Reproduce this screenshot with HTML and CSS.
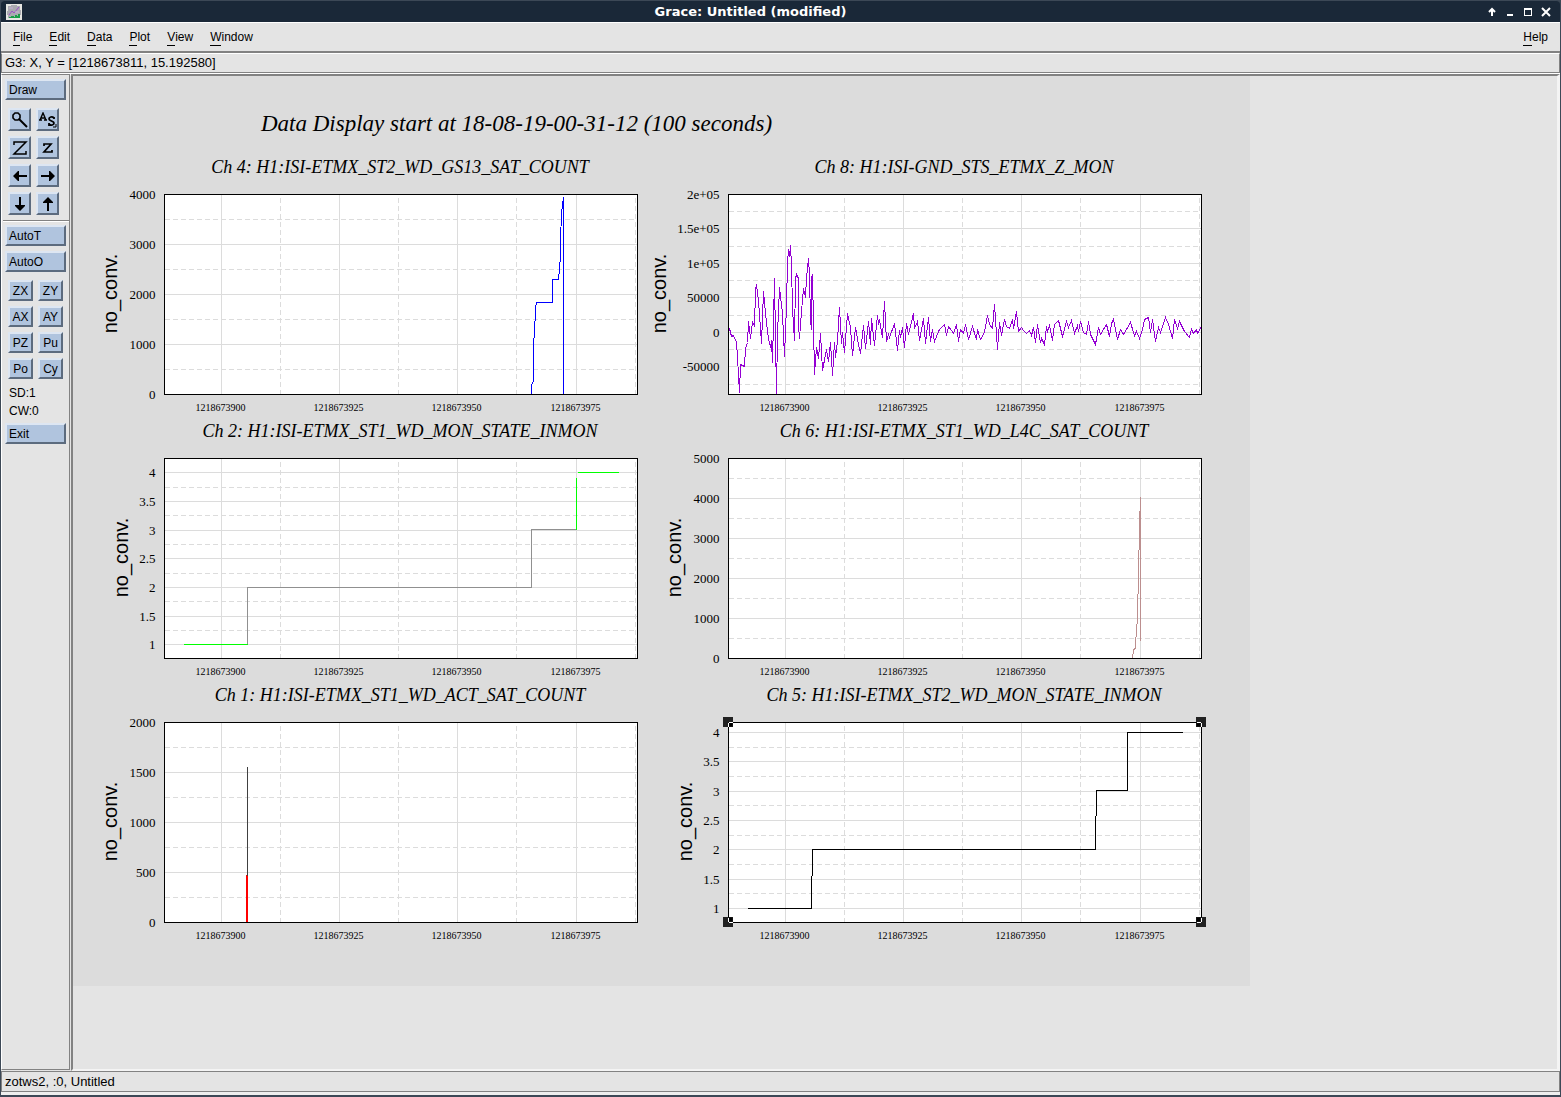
FILE: index.html
```html
<!DOCTYPE html>
<html lang="en">
<head>
  <meta charset="UTF-8" />
  <meta name="viewport" content="width=device-width, initial-scale=1.0"/>
  <title>Grace: Untitled (modified)</title>
  <link rel="stylesheet" href="styles.css">
</head>
<body>
  <div class="window">
    <header class="titlebar">
      <svg class="app-icon" width="16" height="16" viewBox="0 0 16 16">
        <rect width="16" height="16" fill="#e6e6e2"/>
        <path d="M2 2h3v-1h6v1h3v4h1v5h-1v3H2v-3H1V7h1z" fill="#aaaab0"/>
        <path d="M3 11l3-4 2 2 5-6" stroke="#9a50c8" stroke-width="1" fill="none"/>
        <path d="M3 4h4M9 8h4" stroke="#c8b4d8"/>
        <path d="M3 14v-1h2v-1h3v1h1v-2h2v1h1v-2h2v4z" fill="#18a048"/>
      </svg>
      <h1 class="window-title">Grace: Untitled (modified)</h1>
      <div class="window-buttons">
        <button aria-label="Shade"><svg width="10" height="10" viewBox="0 0 10 10"><path d="M5 9V3M2 5l3-3 3 3" stroke="#fff" stroke-width="2" fill="none"/></svg></button>
        <button aria-label="Minimize"><svg width="10" height="10" viewBox="0 0 10 10"><path d="M2 8h6" stroke="#fff" stroke-width="2"/></svg></button>
        <button aria-label="Maximize"><svg width="10" height="10" viewBox="0 0 10 10"><path d="M1 1h8v8H1zM2 3v5h6V3z" fill="#fff" fill-rule="evenodd"/></svg></button>
        <button aria-label="Close"><svg width="10" height="10" viewBox="0 0 10 10"><path d="M1 1l8 8M9 1L1 9" stroke="#fff" stroke-width="2"/></svg></button>
      </div>
    </header>

    <nav class="menubar">
      <button><span>F</span>ile</button>
      <button><span>E</span>dit</button>
      <button><span>D</span>ata</button>
      <button><span>P</span>lot</button>
      <button><span>V</span>iew</button>
      <button><span>W</span>indow</button>
      <button class="help"><span>H</span>elp</button>
    </nav>

    <div class="locator">G3: X, Y = [1218673811, 15.192580]</div>

    <div class="main">
      <aside class="toolbar">
        <button class="btn">Draw</button>
        <div class="icon-grid">
          <button class="btn" aria-label="Zoom">
            <svg width="16" height="16" viewBox="0 0 16 16"><path d="M3 1h3l2 2v3L6 8H3L1 6V3z" fill="none" stroke="#000" stroke-width="1.6"/><path d="M7 7l8 8" stroke="#000" stroke-width="2"/></svg>
          </button>
          <button class="btn" aria-label="Autoscale">
            <svg width="18" height="16" viewBox="0 0 18 16"><path d="M1 8l3-7 3 7M2 6h4M0 8h3M5 8h3" fill="none" stroke="#000" stroke-width="1.4"/><path d="M15 7V5M15 6c-2-2-5-1-5 1s5 2 5 4-3 3-5 1M10 11v3" fill="none" stroke="#000" stroke-width="1.8"/><path d="M14 15h3v-3" fill="none" stroke="#000"/></svg>
          </button>
          <button class="btn" aria-label="Zoom in">
            <svg width="16" height="14" viewBox="0 0 16 14"><path d="M2 4V1h12L2 13h12v-3" fill="none" stroke="#000" stroke-width="1.5"/></svg>
          </button>
          <button class="btn" aria-label="Zoom out">
            <svg width="12" height="12" viewBox="0 0 12 12"><path d="M2 4V2h7L2 10h8V8" fill="none" stroke="#000" stroke-width="1.7"/></svg>
          </button>
          <button class="btn" aria-label="Left">
            <svg width="14" height="12" viewBox="0 0 14 12"><path d="M0 6l5-5h1v4h8v2H6v4H5z"/></svg>
          </button>
          <button class="btn" aria-label="Right">
            <svg width="14" height="12" viewBox="0 0 14 12"><path d="M14 6L9 1H8v4H0v2h8v4h1z"/></svg>
          </button>
          <button class="btn" aria-label="Down">
            <svg width="12" height="14" viewBox="0 0 12 14"><path d="M6 14L1 9V8h4V0h2v8h4v1z"/></svg>
          </button>
          <button class="btn" aria-label="Up">
            <svg width="12" height="14" viewBox="0 0 12 14"><path d="M6 0l5 5v1H7v8H5V6H1V5z"/></svg>
          </button>
        </div>
        <hr>
        <button class="btn">AutoT</button>
        <button class="btn auto-o">AutoO</button>
        <div class="text-grid">
          <button class="btn">ZX</button>
          <button class="btn">ZY</button>
          <button class="btn">AX</button>
          <button class="btn">AY</button>
          <button class="btn">PZ</button>
          <button class="btn">Pu</button>
          <button class="btn">Po</button>
          <button class="btn">Cy</button>
        </div>
        <p>SD:1</p>
        <p>CW:0</p>
        <button class="btn exit">Exit</button>
      </aside>

      <main class="canvas">
        <div class="page">
          <h2 class="page-title">Data Display start at 18-08-19-00-31-12 (100 seconds)</h2>
          <div class="graphs"></div>
        </div>
      </main>
    </div>

    <footer class="statusbar">zotws2, :0, Untitled</footer>
  </div>

  <script>
    const WIDTH = 473;
    const HEIGHT = 200;
    // last three digits of the GPS time at the left edge
    const X_START = 888;
    const X_SPAN = 100;

    // paths are in plot pixels, origin at the top left of the frame
    const graphs = [
      {
        title: 'Ch 4: H1:ISI-ETMX_ST2_WD_GS13_SAT_COUNT',
        min: 0, max: 4000, step: 1000, labelX: -48,
        lines: [
          { color: '#0000ff', d: 'M367 200V191L369 186V148L370 140L371 114L372 108H388V85H394L395 75L396 61V46L397 19L398 10L399 3V200' }
        ]
      },
      {
        title: 'Ch 8: H1:ISI-GND_STS_ETMX_Z_MON',
        min: -90000, max: 200000, step: 50000, labelX: -63,
        lines: [
          { color: '#9400d3', d: 'M0 133L1 134L3 142L5 141L8 148L9 163L11 198L12 170L16 172L17 154L19 148L20 127L22 144L24 127L26 132L27 96L28 90L30 106L33 149L35 97L38 129L40 144L42 153L43 146L44 168L46 84L47 146L48 199L49 140L51 93L54 119L56 162L58 111L59 68L60 55L61 62L62 51L63 71L64 114L66 146L67 84L68 80L70 84V131L71 144L73 117L75 94L77 103L78 83L80 64L81 81L82 126L83 135V83L84 80L85 130L86 180L88 153L90 164L92 139L94 176L98 155L100 167L102 148L104 181L106 148L107 163L109 146L111 113L113 149L114 138L116 158L119 119L122 133L124 161L127 133L130 150L132 159L135 131L137 154L140 127L142 150L143 124L146 151L149 121L150 130L151 125L154 143L156 107' +
            'L158 147L160 140L161 143L166 129L169 156L171 136L172 143L174 133L176 153L178 129L180 140L185 119L186 134L189 127L191 146L195 124L197 149L200 123L202 147L204 135L206 147L210 137L211 135L216 130L218 141L220 132L223 136L225 139L228 130L230 147L232 135L235 139L237 130L240 145L244 132L248 145L249 135L252 145L255 140L257 133L259 121L261 130L264 134L266 110L269 155L271 128L273 141L276 125L278 132L281 134L284 125L285 134L288 117L290 137L293 133L295 136L298 139L301 136L303 141L305 133L307 148L309 130L312 148L313 144L316 150L318 132L319 137L321 131L324 146L326 130L330 126L334 142L338 127L340 133L343 126L346 139L349 131L350 137L352 127L355 138L358 140L360 127L362 140L367 150L370 133L372 140L378 130L381 142L383 129L385 125L389 145L392 135L395 140L402 128L406 141L408 137L411 144L414 135L416 125L420 123L422 138L424 125L427 147L430 133L432 138L437 123L440 130L444 144L446 125L449 134L451 127L456 137L461 143L463 135L465 139L468 135L469 139L473 132' }
        ]
      },
      {
        title: 'Ch 2: H1:ISI-ETMX_ST1_WD_MON_STATE_INMON',
        min: 0.76, max: 4.25, step: 0.5, labelX: -37,
        lines: [
          { color: '#909090', d: 'M83 186V129H367V71H412' },
          { color: '#00ff00', d: 'M19 186H83M412 71V19M413 14H454' }
        ]
      },
      {
        title: 'Ch 6: H1:ISI-ETMX_ST1_WD_L4C_SAT_COUNT',
        min: 0, max: 5000, step: 1000, labelX: -48,
        lines: [
          { color: '#bc8f8f', d: 'M404 200L405 191L407 190V183L408 175L409 156L410 117L411 68L412 39V182' }
        ]
      },
      {
        title: 'Ch 1: H1:ISI-ETMX_ST1_WD_ACT_SAT_COUNT',
        min: 0, max: 2000, step: 500, labelX: -48,
        lines: [
          { color: '#ff0000', d: 'M82 200V153H83V200' },
          { color: '#404040', d: 'M83 153V44' }
        ]
      },
      {
        title: 'Ch 5: H1:ISI-ETMX_ST2_WD_MON_STATE_INMON',
        min: 0.76, max: 4.17, step: 0.5, labelX: -37, selected: true,
        lines: [
          { color: '#000000', d: 'M19 186H83V157L84 150V127H367V98L368 90V68H399V10H454' }
        ]
      }
    ];

    function formatTick(value) {
      if (Math.abs(value) >= 100000) {
        return value / 100000 + 'e+05';
      }
      return String(value);
    }

    function drawGrid(graph) {
      let svg = '';
      for (let s = 12; s < X_SPAN; s += 25) {
        const x = Math.round(s * WIDTH / X_SPAN);
        const half = Math.round((s + 12.5) * WIDTH / X_SPAN);
        svg += `<path class="major" d="M${x} 0V${HEIGHT}"/>`;
        svg += `<path class="minor" d="M${half} ${HEIGHT}V0"/>`;
        svg += `<text class="x-tick" x="${x - 1}" y="216">1218673${X_START + s}</text>`;
      }
      const scale = HEIGHT / (graph.max - graph.min);
      const first = Math.ceil(graph.min / graph.step) - 1;
      for (let i = first; i * graph.step <= graph.max; i++) {
        const value = i * graph.step;
        const y = Math.round((graph.max - value) * scale);
        const half = Math.round((graph.max - value - graph.step / 2) * scale);
        if (value >= graph.min) {
          svg += `<path class="major" d="M0 ${y}H${WIDTH}"/>`;
          svg += `<text class="y-tick" x="-9" y="${y + 4}">${formatTick(value)}</text>`;
        }
        if (half > 0 && half < HEIGHT) {
          svg += `<path class="minor" d="M0 ${half}H${WIDTH}"/>`;
        }
      }
      return svg;
    }

    function drawHandles() {
      let svg = '';
      [0, WIDTH].forEach(x => {
        [0, HEIGHT].forEach(y => {
          const inX = x ? x - 5 : x;
          const inY = y ? y - 5 : y;
          svg += `<rect class="handle" x="${x - 6}" y="${y - 6}" width="10" height="10"/>`;
          svg += `<rect class="handle-inner" x="${inX}" y="${inY}" width="4" height="4"/>`;
          svg += `<path class="handle-line" d="M${x} ${inY}v4M${inX} ${y}h4"/>`;
        });
      });
      return svg;
    }

    function drawGraph(graph) {
      const lines = graph.lines.map(line => `<path class="line" stroke="${line.color}" d="${line.d}"/>`).join('');
      return `<svg class="graph" width="564" height="264" viewBox="0 0 564 264">
        <text class="graph-title" x="311" y="19">${graph.title}</text>
        <g transform="translate(75.5 40.5)">
          <rect class="plot-bg" width="${WIDTH}" height="${HEIGHT}"/>
          ${drawGrid(graph)}
          ${lines}
          <rect class="frame" width="${WIDTH}" height="${HEIGHT}"/>
          <text class="y-label" transform="translate(${graph.labelX} 99) rotate(-90)">no_conv.</text>
          ${graph.selected ? drawHandles() : ''}
        </g>
      </svg>`;
    }

    // Initialize
    graphs.forEach(graph => {
      document.querySelector('.graphs').insertAdjacentHTML('beforeend', drawGraph(graph));
    });
  </script>
</body>
</html>
```
FILE: styles.css
```css
* {
  box-sizing: border-box;
}
body {
  margin: 0;
  background: #3c4856;
  color: #000;
  font-family: "Liberation Sans", Arial, sans-serif;
  font-size: 12px;
}
button {
  font: inherit;
  color: inherit;
  background: none;
  border: none;
  padding: 0;
}
svg {
  display: block;
}
.window {
  display: flex;
  flex-direction: column;
  min-height: 100vh;
  padding: 0 1px 2px;
}
.titlebar {
  display: flex;
  align-items: center;
  height: 22px;
  padding: 0 9px 0 5px;
  background: #1a2838;
  border-top: 1px solid #3c4856;
  border-radius: 4px 4px 0 0;
  color: #fff;
}
.window-title {
  flex: 1;
  margin: 0;
  padding-right: 8px;
  font-family: "DejaVu Sans", sans-serif;
  font-size: 13px;
  line-height: 22px;
  text-align: center;
}
.window-buttons {
  display: flex;
  gap: 8px;
}
.menubar {
  display: flex;
  align-items: center;
  gap: 17px;
  height: 31px;
  padding: 0 12px;
  background: #e4e4e4;
  border-top: 1px solid #fff;
  border-bottom: 2px solid #828282;
  line-height: 16px;
}
.menubar span {
  display: inline-block;
  border-bottom: 1px solid #000;
}
.menubar .help {
  margin-left: auto;
}
.locator,
.statusbar {
  height: 20px;
  padding-left: 3px;
  background: #e4e4e4;
  border: 1px solid #828282;
  border-top-color: #fff;
  font-size: 13px;
  line-height: 17px;
}
.main {
  flex: 1;
  display: flex;
  background: #e4e4e4;
  border-top: 1px solid #fff;
}
.toolbar {
  flex: none;
  width: 69px;
  padding: 4px 3px 0;
  border: 1px solid #828282;
  border-left-color: #fff;
  margin-bottom: 1px;
}
.toolbar hr {
  margin: 5px -3px 3px -2px;
  border: none;
  border-top: 1px solid #828282;
  border-bottom: 1px solid #fff;
}
.toolbar p {
  margin: 0 0 0 4px;
  line-height: 18px;
}
.btn {
  display: flex;
  align-items: center;
  width: 61px;
  height: 21px;
  padding-left: 2px;
  background: #b0c4de;
  border: 2px solid;
  border-color: #dde6f2 #5c6b7e #5c6b7e #dde6f2;
}
.auto-o {
  margin-top: 5px;
}
.exit {
  margin-top: 3px;
}
.icon-grid,
.text-grid {
  display: grid;
  margin-left: 3px;
}
.icon-grid {
  grid-template-columns: 23px 23px;
  gap: 5px;
  margin-top: 8px;
}
.icon-grid .btn {
  width: 23px;
  height: 23px;
  padding: 0;
  justify-content: center;
}
.text-grid {
  grid-template-columns: 25px 25px;
  gap: 5px;
  margin-top: 8px;
  margin-bottom: 5px;
}
.text-grid .btn {
  width: 25px;
  padding: 0;
  justify-content: center;
}
.canvas {
  flex: 1;
  min-width: 0;
  margin-left: 1px;
  border: solid;
  border-width: 2px 3px 2px 2px;
  border-color: #828282 #f4f4f4 #f4f4f4 #828282;
}
.page {
  width: max-content;
  padding: 24px 33px 40px 16px;
  background: #dcdcdc;
}
.page-title {
  margin: 0 0 6px 172px;
  font-family: "Liberation Serif", serif;
  font-size: 23px;
  font-style: italic;
  font-weight: normal;
  line-height: 48px;
}
.graphs {
  display: grid;
  grid-template-columns: 564px 564px;
}
.graph {
  overflow: visible;
  font-family: "Liberation Serif", serif;
}
.graph-title {
  font-size: 18px;
  font-style: italic;
  text-anchor: middle;
}
.x-tick {
  font-size: 10px;
  text-anchor: middle;
}
.y-tick {
  font-size: 13px;
  text-anchor: end;
}
.y-label {
  font-family: "Liberation Sans", Arial, sans-serif;
  font-size: 20px;
  text-anchor: middle;
}
.plot-bg {
  fill: #fff;
}
.graph path,
.frame {
  fill: none;
  shape-rendering: crispEdges;
}
.major,
.minor {
  stroke: #dcdcdc;
}
.minor {
  stroke-dasharray: 5 3;
}
.frame {
  stroke: #000;
}
.handle {
  fill: #222;
  shape-rendering: crispEdges;
}
.handle-inner {
  fill: #000;
}
.handle-line {
  stroke: #fff;
}
.statusbar {
  height: 21px;
  margin-bottom: 3px;
  border-top-color: #828282;
  box-shadow: 0 3px 0 #eee;
  line-height: 19px;
}
```
